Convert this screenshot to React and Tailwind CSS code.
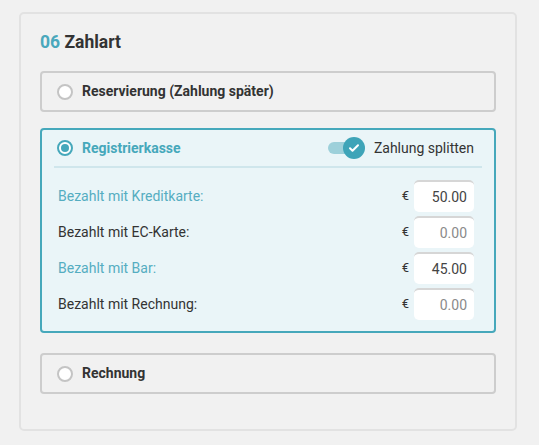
import React from 'react';

const Radio = ({ checked }) =>
    checked ? (
        <span className="flex h-4 w-4 items-center justify-center rounded-full border-2 border-[#46a8bb] bg-white">
            <span className="h-2 w-2 rounded-full bg-[#46a8bb]" />
        </span>
    ) : (
        <span className="h-4 w-4 rounded-full border-2 border-[#c4c4c4] bg-white" />
    );

const Option = ({ label }) => (
    <div className="flex h-[41px] items-center rounded-[4px] border-2 border-[#cdcdcd] pl-[15px]">
        <Radio />
        <span className="ml-[9px] text-[14px] font-bold text-[#333]">{label}</span>
    </div>
);

const Row = ({ label, value, active }) => (
    <div className="flex h-8 items-center">
        <span className={`flex-1 text-[14px] ${active ? 'text-[#55adc1]' : 'text-[#333]'}`}>{label}</span>
        <span className="mr-[5px] text-[13px] text-[#333]">€</span>
        <div className="flex h-8 w-[60px] items-center justify-end rounded-[5px] border-t-2 border-[#d6d6d6] bg-white pr-[7px]">
            <span className={`text-[14px] ${active ? 'text-[#444]' : 'text-[#8a8a8a]'}`}>{value}</span>
        </div>
    </div>
);

export default function App() {
    return (
        <div className="min-h-[445px] bg-[#f1f1f1] pl-[19px] pt-[12px]" style={{ fontFamily: 'Roboto, "Liberation Sans", sans-serif' }}>
            <div className="h-[419px] w-[498px] rounded-[5px] border-2 border-[#e2e2e2] px-[19px] pt-[18px]">
                <h2 className="text-[17.5px] font-bold leading-5 text-[#333]">
                    <span className="text-[#4aa8bc]">06</span> Zahlart
                </h2>

                <div className="mt-[19px]">
                    <Option label="Reservierung (Zahlung später)" />
                </div>

                {/* Registrierkasse, selected */}
                <div className="mt-[16px] rounded-[4px] border-2 border-[#46a8bb] bg-[#eaf5f8] pb-[11px]">
                    <div className="mx-3 flex h-[38px] items-center border-b-2 border-[#cfe6ec] pl-[3px] pr-2">
                        <Radio checked />
                        <span className="ml-[9px] flex-1 text-[14px] font-bold text-[#46a8bb]">Registrierkasse</span>
                        <div className="relative mr-[9px] h-[22px] w-[37px]">
                            <div className="absolute left-0 top-[5px] h-3 w-[28px] rounded-full bg-[#9dd0da]" />
                            <div className="absolute right-0 top-0 flex h-[22px] w-[22px] items-center justify-center rounded-full bg-[#3ea4b8]">
                                <svg width="12" height="12" viewBox="0 0 24 24" fill="none" stroke="white" strokeWidth="4" strokeLinecap="round" strokeLinejoin="round">
                                    <path d="M4 12.5l5 5L20 6.5" />
                                </svg>
                            </div>
                        </div>
                        <span className="text-[14px] text-[#333]">Zahlung splitten</span>
                    </div>
                    <div className="mt-3 flex flex-col gap-1 pl-[16px] pr-[20px]">
                        <Row label="Bezahlt mit Kreditkarte:" value="50.00" active />
                        <Row label="Bezahlt mit EC-Karte:" value="0.00" />
                        <Row label="Bezahlt mit Bar:" value="45.00" active />
                        <Row label="Bezahlt mit Rechnung:" value="0.00" />
                    </div>
                </div>

                <div className="mt-[20px]">
                    <Option label="Rechnung" />
                </div>
            </div>
        </div>
    );
}
